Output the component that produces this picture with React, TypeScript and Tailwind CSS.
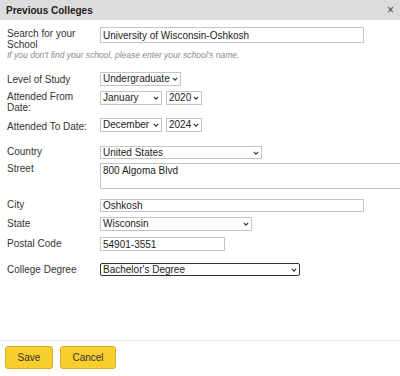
import React from 'react';

const Chevron = () => (
  <svg width="6" height="4" viewBox="0 0 6 4" className="pointer-events-none absolute right-[3px] top-1/2 -translate-y-1/2">
    <path d="M0.8 0.9 L3 3.1 L5.2 0.9" fill="none" stroke="#333" strokeWidth="1.1" />
  </svg>
);

const Select: React.FC<{ value: string; options: string[]; className: string; dark?: boolean }> = ({
  value,
  options,
  className,
  dark,
}) => (
  <div className={`relative shrink-0 ${className}`}>
    <select
      defaultValue={value}
      className={`block h-full w-full appearance-none bg-white py-0 pl-[2px] pr-[7px] text-[10px] leading-[12px] text-[#222] outline-none ${
        dark ? 'rounded-[2px] border border-[#333]' : 'border border-[#c4c4c4]'
      }`}
    >
      {options.map(o => (
        <option key={o}>{o}</option>
      ))}
    </select>
    <Chevron />
  </div>
);

const Row: React.FC<{ label: React.ReactNode; className: string; children: React.ReactNode }> = ({
  label,
  className,
  children,
}) => (
  <div className={`flex items-start ${className}`}>
    <div className="w-[93px] shrink-0 pr-[8px] text-[10px] leading-[11px] text-[#333]">{label}</div>
    {children}
  </div>
);

const inputCls =
  'block shrink-0 border border-[#c4c4c4] bg-white px-[2px] py-0 text-[10px] leading-[12px] text-[#222] outline-none';

export default function App() {
  return (
    <div
      className="h-[376px] w-[400px] overflow-hidden bg-white"
      style={{ fontFamily: '"Liberation Sans", Arial, sans-serif' }}
    >
      <div className="flex h-[20px] items-center justify-between bg-[#dcdcdc] pl-[6px] pr-[6px]">
        <span className="text-[10px] font-bold text-[#222]">Previous Colleges</span>
        <span className="text-[12px] leading-none text-[#444]">×</span>
      </div>

      <div className="pl-[7px]">
        <Row label={<div className="pt-[1px]">Search for your School</div>} className="mt-[7px] h-[22px]">
          <input defaultValue="University of Wisconsin-Oshkosh" className={`${inputCls} h-[16px] w-[264px]`} />
        </Row>
        <div className="mt-[1px] text-[8.5px] italic leading-[10px] text-[#8a8a8a]">
          If you don't find your school, please enter your school's name.
        </div>

        <Row label={<div className="pt-[2px]">Level of Study</div>} className="mt-[12px]">
          <Select value="Undergraduate" options={['Undergraduate', 'Graduate']} className="h-[14px] w-[81px]" />
        </Row>

        <Row label={<div className="pt-[0px]">Attended From Date:</div>} className="mt-[5px] h-[22px]">
          <div className="flex gap-[4px]">
            <Select value="January" options={['January', 'December']} className="h-[14px] w-[62px]" />
            <Select value="2020" options={['2020', '2024']} className="h-[14px] w-[36px]" />
          </div>
        </Row>

        <Row label={<div className="pt-[3px]">Attended To Date:</div>} className="mt-[5px]">
          <div className="flex gap-[4px]">
            <Select value="December" options={['January', 'December']} className="h-[14px] w-[62px]" />
            <Select value="2024" options={['2020', '2024']} className="h-[14px] w-[36px]" />
          </div>
        </Row>

        <Row label="Country" className="mt-[14px]">
          <Select value="United States" options={['United States', 'Canada']} className="h-[13px] w-[162px]" />
        </Row>

        <Row label="Street" className="mt-[4px]">
          <textarea
            defaultValue="800 Algoma Blvd"
            className="block h-[26px] w-[310px] shrink-0 resize-none border border-[#c4c4c4] px-[2px] pt-[1px] text-[10px] leading-[12px] text-[#222] outline-none"
          />
        </Row>

        <Row label="City" className="mt-[10px]">
          <input defaultValue="Oshkosh" className={`${inputCls} h-[13px] w-[264px]`} />
        </Row>

        <Row label={<div className="pt-[1px]">State</div>} className="mt-[5px]">
          <Select value="Wisconsin" options={['Wisconsin', 'Ohio']} className="h-[14px] w-[152px]" />
        </Row>

        <Row label={<div className="pt-[1px]">Postal Code</div>} className="mt-[6px]">
          <input defaultValue="54901-3551" className={`${inputCls} h-[14px] w-[125px]`} />
        </Row>

        <Row label={<div className="pt-[1px]">College Degree</div>} className="mt-[12px]">
          <Select
            value="Bachelor's Degree"
            options={["Bachelor's Degree", "Master's Degree"]}
            className="h-[13px] w-[200px]"
            dark
          />
        </Row>
      </div>

      <div className="mt-[64px] border-t border-[#ececec] pl-[5px] pt-[5px]">
        <div className="flex gap-[7px]">
          <button className="h-[23px] w-[48px] rounded-[3px] border border-[#d6ad2a] bg-[#f8cd2e] text-[10px] text-[#333]">
            Save
          </button>
          <button className="h-[23px] w-[56px] rounded-[3px] border border-[#d6ad2a] bg-[#f8cd2e] text-[10px] text-[#333]">
            Cancel
          </button>
        </div>
      </div>
    </div>
  );
}
